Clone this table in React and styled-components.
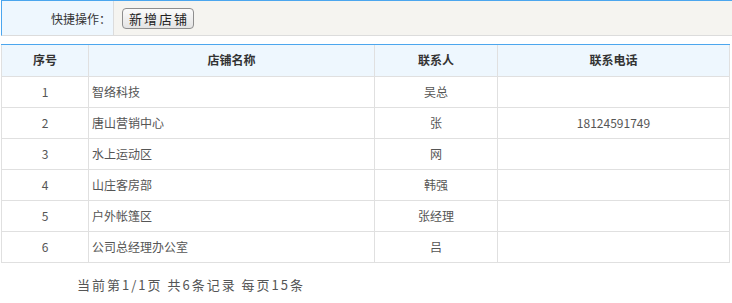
import styled, { createGlobalStyle } from "styled-components";

const GlobalStyle = createGlobalStyle`
  body {
    margin: 0;
    background: #fff;
    font-family: "Noto Sans CJK SC", "Noto Sans", sans-serif;
    font-size: 12px;
    color: #555;
  }
`;

const Page = styled.div`
  width: 732px;
  padding-left: 1px;
  box-sizing: border-box;
`;

const Toolbar = styled.div`
  display: flex;
  height: 36px;
  border-top: 1px solid #4ba6ee;
  border-left: 1px solid #4ba6ee;
  border-bottom: 1px solid #dcdcdc;
  box-sizing: border-box;
`;

const ToolLabel = styled.div`
  width: 112px;
  display: flex;
  align-items: center;
  justify-content: flex-end;
  padding-right: 2px;
  box-sizing: border-box;
  background: #eef7fe;
  border-right: 1px solid #dcdcdc;
  color: #333;
  font-size: 12px;
`;

const ToolBody = styled.div`
  flex: 1;
  display: flex;
  align-items: center;
  padding-left: 8px;
  background: #f5f4f0;
`;

const Button = styled.button`
  height: 21px;
  padding: 0 4px 0 6px;
  border: 1px solid #8e8e8e;
  border-radius: 4px;
  background: linear-gradient(#fbfbfb, #e4e4e4);
  font-family: inherit;
  font-size: 13px;
  letter-spacing: 2px;
  color: #222;
  line-height: 19px;
`;

const Table = styled.table`
  margin-top: 8px;
  width: 729px;
  border-collapse: collapse;
  table-layout: fixed;
  border-left: 1px solid #e0e0e0;
  border-right: 1px solid #e0e0e0;
`;

const Th = styled.th`
  height: 29px;
  background: #eef7fe;
  border-top: 1px solid #4ba6ee;
  border-left: 1px solid #e0e0e0;
  border-bottom: 1px solid #e0e0e0;
  font-weight: bold;
  color: #333;
  padding: 0 0 2px;
`;

const Td = styled.td`
  height: 28px;
  border: 1px solid #e0e0e0;
  padding: 0 3px 2px;
  text-align: ${(p) => p.$align || "center"};
  color: #555;
`;

const Footer = styled.div`
  padding: 12px 0 0 76px;
  letter-spacing: 2px;
  color: #555;
  font-size: 13px;
`;

const rows = [
  ["1", "智络科技", "吴总", ""],
  ["2", "唐山营销中心", "张", "18124591749"],
  ["3", "水上运动区", "网", ""],
  ["4", "山庄客房部", "韩强", ""],
  ["5", "户外帐篷区", "张经理", ""],
  ["6", "公司总经理办公室", "吕", ""],
];

export default function App() {
  return (
    <Page>
      <GlobalStyle />
      <Toolbar>
        <ToolLabel>快捷操作：</ToolLabel>
        <ToolBody>
          <Button>新增店铺</Button>
        </ToolBody>
      </Toolbar>
      <Table>
        <colgroup>
          <col style={{ width: 87 }} />
          <col style={{ width: 286 }} />
          <col style={{ width: 123 }} />
          <col />
        </colgroup>
        <thead>
          <tr>
            <Th>序号</Th>
            <Th>店铺名称</Th>
            <Th>联系人</Th>
            <Th>联系电话</Th>
          </tr>
        </thead>
        <tbody>
          {rows.map((r) => (
            <tr key={r[0]}>
              <Td>{r[0]}</Td>
              <Td $align="left">{r[1]}</Td>
              <Td>{r[2]}</Td>
              <Td>{r[3]}</Td>
            </tr>
          ))}
        </tbody>
      </Table>
      <Footer>当前第1/1页 共6条记录 每页15条</Footer>
    </Page>
  );
}
